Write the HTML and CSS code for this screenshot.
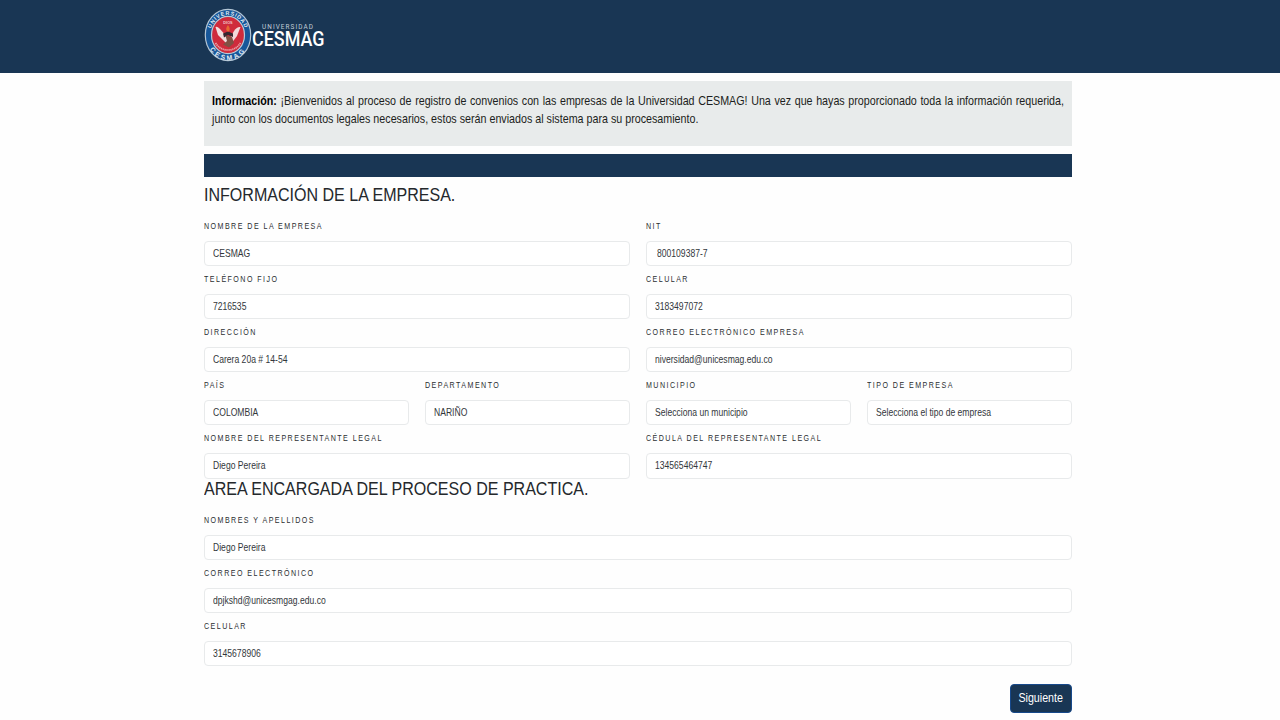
FILE: index.html
```html
<!DOCTYPE html>
<html lang="es">
<head>
<meta charset="utf-8">
<title>Registro de convenios</title>
<link rel="stylesheet" href="styles.css">
</head>
<body>
<header class="topbar">
  <svg class="logo" width="124" height="58" viewBox="0 0 124 58">
    <defs>
      <path id="arc-top" d="M7.2 29 A17.8 20 0 0 1 42.8 29"/>
      <path id="arc-bottom" d="M3.6 31 A21.4 23.2 0 0 0 46.4 31"/>
    </defs>
    <ellipse cx="25" cy="29" rx="22.7" ry="25.7" fill="#17579a" stroke="#b4c6d5" stroke-width="1.2"/>
    <ellipse cx="25" cy="29" rx="16.5" ry="18.6" fill="#cf2b3c" stroke="#b9cad8" stroke-width="1.2"/>
    <text class="seal-text seal-top"><textPath href="#arc-top" startOffset="50%" text-anchor="middle">UNIVERSIDAD</textPath></text>
    <text class="seal-text seal-bottom"><textPath href="#arc-bottom" startOffset="50%" text-anchor="middle">CESMAG</textPath></text>
    <text class="seal-dios" x="25" y="17.7" text-anchor="middle">DIOS</text>
    <path d="M12.5 21 Q14 20 17 23 L24 31 L28 38 L23 37 L15 29 Z" fill="#f2dfdf"/>
    <path d="M37.5 21 Q34 20.5 31 25 L26 34 L28 38 L34 30 Z" fill="#f2d8da"/>
    <path d="M20 27.5 L25 25.5 L30 27.5 L30 31 L25 29 L21 31.5 Z" fill="#34262f"/>
    <path d="M22.5 29.5 L29 31 L31 37 L26 41.5 L20 38.5 L24 35 Z" fill="#805044"/>
    <path d="M24.5 25.5 Q21.5 23 25 19 Q28 23 25.8 25.5 Z" fill="#e66b31"/>
    <path d="M12.5 37 Q17 44 25 44 Q33 44 37.5 37" fill="none" stroke="#e7a4aa" stroke-width="1.7" stroke-dasharray="1.3 .6"/>
    <text class="word-small" x="59" y="22.9" textLength="51">UNIVERSIDAD</text>
    <text class="word-big" x="49" y="40" textLength="72.5" lengthAdjust="spacingAndGlyphs">CESMAG</text>
  </svg>
</header>
<main class="page">
  <section class="notice">
    <p class="notice-text"><b>Información:</b> ¡Bienvenidos al proceso de registro de convenios con las empresas de la Universidad CESMAG! Una vez que hayas proporcionado toda la información requerida, junto con los documentos legales necesarios, estos serán enviados al sistema para su procesamiento.</p>
  </section>
  <div class="strip"></div>
  <form class="form">
    <h2 class="title"><span class="narrow">INFORMACIÓN DE LA EMPRESA.</span></h2>
    <div class="grid">
      <div class="field half"><div class="label"><span class="narrow">NOMBRE DE LA EMPRESA</span></div><div class="box"><span class="narrow">CESMAG</span></div></div>
      <div class="field half"><div class="label"><span class="narrow">NIT</span></div><div class="box box-indent"><span class="narrow">800109387-7</span></div></div>
      <div class="field half"><div class="label"><span class="narrow">TELÉFONO FIJO</span></div><div class="box"><span class="narrow">7216535</span></div></div>
      <div class="field half"><div class="label"><span class="narrow">CELULAR</span></div><div class="box"><span class="narrow">3183497072</span></div></div>
      <div class="field half"><div class="label"><span class="narrow">DIRECCIÓN</span></div><div class="box"><span class="narrow">Carera 20a # 14-54</span></div></div>
      <div class="field half"><div class="label"><span class="narrow">CORREO ELECTRÓNICO EMPRESA</span></div><div class="box"><span class="narrow">niversidad@unicesmag.edu.co</span></div></div>
      <div class="field"><div class="label"><span class="narrow">PAÍS</span></div><div class="box"><span class="narrow">COLOMBIA</span></div></div>
      <div class="field"><div class="label"><span class="narrow">DEPARTAMENTO</span></div><div class="box"><span class="narrow">NARIÑO</span></div></div>
      <div class="field"><div class="label"><span class="narrow">MUNICIPIO</span></div><div class="box"><span class="narrow">Selecciona un municipio</span></div></div>
      <div class="field"><div class="label"><span class="narrow">TIPO DE EMPRESA</span></div><div class="box"><span class="narrow">Selecciona el tipo de empresa</span></div></div>
      <div class="field half"><div class="label"><span class="narrow">NOMBRE DEL REPRESENTANTE LEGAL</span></div><div class="box"><span class="narrow">Diego Pereira</span></div></div>
      <div class="field half"><div class="label"><span class="narrow">CÉDULA DEL REPRESENTANTE LEGAL</span></div><div class="box"><span class="narrow">134565464747</span></div></div>
    </div>
    <h2 class="title"><span class="narrow">AREA ENCARGADA DEL PROCESO DE PRACTICA.</span></h2>
    <div class="grid">
      <div class="field full"><div class="label"><span class="narrow">NOMBRES Y APELLIDOS</span></div><div class="box"><span class="narrow">Diego Pereira</span></div></div>
      <div class="field full"><div class="label"><span class="narrow">CORREO ELECTRÓNICO</span></div><div class="box"><span class="narrow">dpjkshd@unicesmgag.edu.co</span></div></div>
      <div class="field full"><div class="label"><span class="narrow">CELULAR</span></div><div class="box"><span class="narrow">3145678906</span></div></div>
    </div>
    <div class="actions"><button class="next" type="button"><span class="next-text">Siguiente</span></button></div>
  </form>
</main>
</body>
</html>
```
FILE: styles.css
```css
* { box-sizing: border-box; }
body {
  margin: 0;
  height: 720px;
  overflow: hidden;
  background: #fefefe;
  color: #24282c;
  font-family: "Liberation Sans", Arial, sans-serif;
}
.topbar {
  height: 73px;
  padding: 6px 0 0 203px;
  background: #193654;
}
.logo { display: block; overflow: visible; }
.seal-text { fill: #e3ebf2; font-weight: bold; }
.seal-top { font-size: 5.4px; letter-spacing: .8px; }
.seal-bottom { font-size: 6.8px; letter-spacing: 2.4px; }
.seal-dios { fill: #f0c6ca; font-size: 3.8px; font-weight: bold; }
.word-small { fill: #c3ced8; font-family: Roboto, sans-serif; font-size: 6.4px; }
.word-big { fill: #fff; font-family: Roboto, sans-serif; font-size: 20px; font-weight: 500; }
.page { width: 868px; margin: 8px 0 0 204px; }
.notice {
  height: 65px;
  padding: 11px 8px 0;
  background: #e8ebeb;
}
.notice-text {
  width: 1017.9px;
  margin: 0;
  color: #1c1e20;
  font-size: 12.8px;
  line-height: 18.3px;
  text-align: justify;
  transform: scaleX(.837);
  transform-origin: 0 0;
}
.notice-text b { color: #000; }
.strip { height: 23px; margin-top: 8px; background: #193654; }
.form { padding-top: 7.5px; }
.narrow { display: inline-block; white-space: nowrap; transform-origin: 0 50%; }
.title {
  height: 28.3px;
  margin: 0;
  font-size: 18.5px;
  font-weight: normal;
  line-height: 20.6px;
}
.title .narrow { transform: scaleX(.867); }
.grid {
  display: grid;
  grid-template-columns: repeat(4, 205px);
  column-gap: 16px;
}
.field { min-width: 0; }
.half { grid-column: span 2; }
.full { grid-column: span 4; }
.label {
  height: 27.75px;
  color: #2b2e31;
  font-size: 8.8px;
  line-height: 26.6px;
  letter-spacing: 1.8px;
}
.label .narrow { transform: scaleX(.807); }
.box {
  height: 25.4px;
  padding-left: 7.6px;
  border: 1px solid #e8eaeb;
  border-radius: 4px;
  background: #fff;
  color: #33373b;
  font-size: 10.8px;
  line-height: 22.4px;
}
.box-indent { padding-left: 10px; }
.box .narrow { transform: scaleX(.795); }
.actions { display: flex; justify-content: flex-end; padding-top: 18px; }
.next {
  display: flex;
  align-items: center;
  justify-content: center;
  width: 62px;
  height: 29px;
  padding: 0 0 1.5px;
  border: 1px solid #17498b;
  border-radius: 4px;
  background: #193654;
  color: #fff;
  font: 12.8px "Liberation Sans", Arial, sans-serif;
}
.next-text { transform: scaleX(.835); }
```
